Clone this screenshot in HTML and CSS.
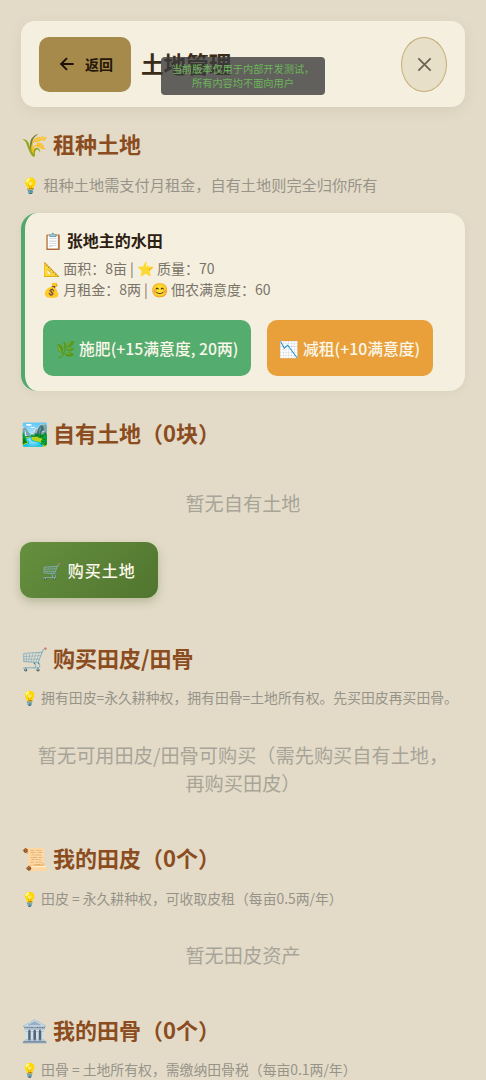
FILE: index.html
```html
<!DOCTYPE html>
<html lang="zh">
<head>
<meta charset="utf-8">
<title>土地管理</title>
<link rel="stylesheet" href="styles.css">
</head>
<body>
<div class="page">
  <header class="header">
    <button class="back"><svg class="back-icon" viewBox="0 0 24 24"><path d="M20 12H5M12 5l-7 7 7 7"/></svg><span>返回</span></button>
    <h1 class="title">土地管理</h1>
    <button class="close"><svg class="close-icon" viewBox="0 0 24 24"><path d="M5 5l14 14M19 5L5 19"/></svg></button>
  </header>
  <div class="toast">当前版本仅用于内部开发测试，<br>所有内容均不面向用户</div>

  <section class="sec-rent">
    <h2 class="h">🌾 租种土地</h2>
    <p class="hint hint-lg">💡 租种土地需支付月租金，自有土地则完全归你所有</p>
    <div class="card">
      <div class="card-title">📋 张地主的水田</div>
      <div class="card-info">📐 面积：8亩 | ⭐ 质量：70<br>💰 月租金：8两 | 😊 佃农满意度：60</div>
      <div class="actions">
        <button class="act green">🌿 施肥(+15满意度, 20两)</button>
        <button class="act orange">📉 减租(+10满意度)</button>
      </div>
    </div>
  </section>

  <section class="sec-own">
    <h2 class="h">🏞️ 自有土地（0块）</h2>
    <p class="empty">暂无自有土地</p>
    <button class="buy">🛒 购买土地</button>
  </section>

  <section class="sec-buy">
    <h2 class="h">🛒 购买田皮/田骨</h2>
    <p class="hint">💡 拥有田皮=永久耕种权，拥有田骨=土地所有权。先买田皮再买田骨。</p>
    <p class="empty">暂无可用田皮/田骨可购买（需先购买自有土地，<br>再购买田皮）</p>
  </section>

  <section class="sec-skin">
    <h2 class="h">📜 我的田皮（0个）</h2>
    <p class="hint">💡 田皮 = 永久耕种权，可收取皮租（每亩0.5两/年）</p>
    <p class="empty">暂无田皮资产</p>
  </section>

  <section class="sec-bone">
    <h2 class="h">🏛️ 我的田骨（0个）</h2>
    <p class="hint">💡 田骨 = 土地所有权，需缴纳田骨税（每亩0.1两/年）</p>
  </section>
</div>
</body>
</html>
```
FILE: styles.css
```css
* { box-sizing: border-box; }
html, body { margin: 0; height: 1080px; overflow: hidden; }
body {
  background: #e3dbc8;
  font-family: "Noto Sans CJK SC", "Noto Sans", sans-serif;
  color: #3a2a18;
}
.page { position: relative; padding: 21px 21px 0; }
.header {
  display: flex;
  align-items: center;
  height: 86px;
  padding: 0 18px;
  background: #f5efe0;
  border-radius: 14px;
  box-shadow: 0 4px 14px rgba(90, 70, 30, 0.08);
}
button { font-family: inherit; border: 0; }
.back {
  display: flex; align-items: center; justify-content: center; gap: 8px;
  width: 92px; height: 55px;
  background: #a68a4b; color: #24160a;
  border-radius: 10px;
  font-size: 14px; font-weight: 700;
}
.back-icon { width: 20px; height: 20px; fill: none; stroke: #1e1208; stroke-width: 2.4; }
.title { margin: 0 0 0 10px; flex: 1; font-size: 22.6px; font-weight: 700; line-height: 32px; color: #3a2a18; }
.close {
  width: 46px; height: 55px; padding: 0;
  display: flex; align-items: center; justify-content: center;
  background: #e8dfc8; border: 1px solid #c4ae76; border-radius: 50%;
}
.close-icon { width: 21px; height: 21px; fill: none; stroke: #6b6250; stroke-width: 2; }
.toast {
  position: absolute; left: 161px; top: 57px; width: 164px; height: 38px;
  padding: 5px 0;
  background: rgba(60, 60, 60, 0.8);
  border-radius: 4px;
  color: #6cb558;
  font-size: 10.2px; line-height: 14px; text-align: center;
}
.h { margin: 0; font-size: 22px; font-weight: 700; line-height: 32px; color: #8b4c20; }
.hint { margin: 0; font-size: 13.85px; line-height: 20px; color: #979388; }
.hint-lg { font-size: 15.2px; line-height: 22px; }
.empty { margin: 0; font-size: 19.2px; line-height: 28px; color: #a8a498; text-align: center; }
section { display: block; }
.sec-rent { padding-top: 20px; }
.sec-rent .hint { margin-top: 14px; }
.card {
  margin-top: 18px; height: 178px;
  padding: 15px 18px;
  background: #f5efe0;
  border-left: 4px solid #4fa96a;
  border-radius: 16px;
  box-shadow: 0 2px 8px rgba(90, 70, 30, 0.06);
}
.card-title { font-size: 16px; font-weight: 700; line-height: 24px; color: #2c2010; }
.card-info { margin-top: 6px; font-size: 14px; line-height: 21px; color: #7a7468; }
.actions { display: flex; gap: 16px; margin-top: 20px; }
.act {
  height: 56px; padding: 0 12.5px;
  border-radius: 10px; color: #fbf7ea;
  font-size: 15.8px; font-weight: 500; white-space: nowrap;
}
.green { background: #54ac6e; }
.orange { background: #e9a03b; }
.sec-own { padding-top: 25px; }
.sec-own .empty { margin-top: 41px; }
.buy {
  display: block; margin: 25px 0 0 -1px; width: 138px; height: 56px;
  background: linear-gradient(135deg, #66903f, #50752f);
  border-radius: 12px; color: #fbf7ea;
  font-size: 16px; font-weight: 500; letter-spacing: 1px;
  box-shadow: 0 4px 10px rgba(85, 110, 50, 0.3);
}
.sec-buy { padding-top: 43px; }
.sec-buy .hint { margin-top: 14px; }
.sec-buy .empty { margin: 34px 0 0; }
.sec-skin { padding-top: 44px; }
.sec-skin .hint { margin-top: 15px; }
.sec-skin .empty { margin-top: 33px; }
.sec-bone { padding-top: 44px; }
.sec-bone .hint { margin-top: 14px; }
```
